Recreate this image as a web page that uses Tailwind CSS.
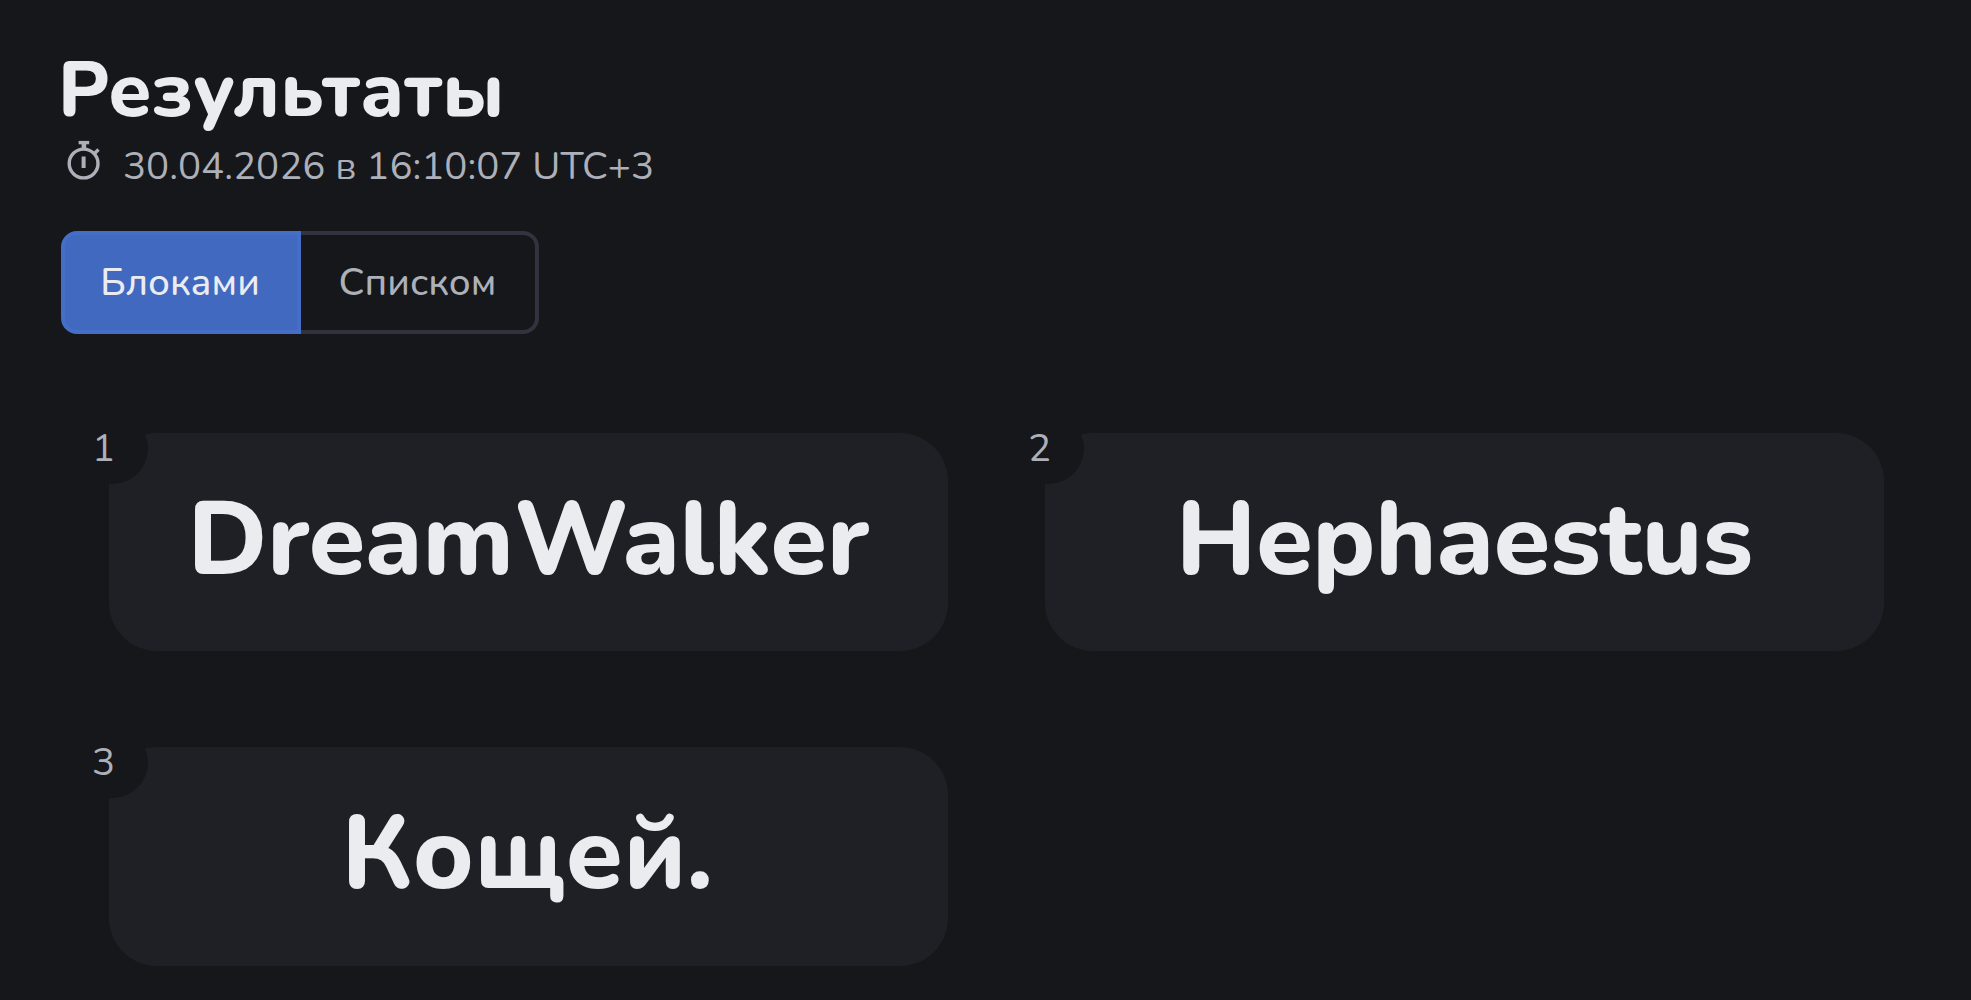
<!DOCTYPE html>
<html lang="ru">
<head>
    <meta charset="UTF-8">
    <meta name="viewport" content="width=device-width, initial-scale=1.0">
    <title>Результаты</title>
    <script src="https://cdn.jsdelivr.net/npm/@tailwindcss/browser@4"></script>
</head>
<body class="h-screen overflow-hidden bg-[#15171a] font-['Nunito','Noto_Sans',sans-serif] text-[38.5px] text-[#adb0b9]">
    <main class="pt-[44px] pl-[61px] pr-[51px]">
        <!-- Header -->
        <h1 class="-ml-[3px] text-[77.4px] leading-[93px] font-extrabold text-[#ebecf0]">Результаты</h1>
        <div class="flex items-start h-[58px] mt-px">
            <svg class="w-[46px] h-[46px]" viewBox="0 0 46 46" fill="none" stroke="currentColor" stroke-width="3.4">
                <circle cx="22.6" cy="25.5" r="14.4"/>
                <path d="M17.6 4.6h10.6"/>
                <path d="M22.9 5v7" stroke-width="4.6"/>
                <path d="M32.5 16.5l5-5"/>
                <path d="M22.6 18.5v11.5" stroke-width="4"/>
            </svg>
            <span class="ml-[16px] leading-[58px]">30.04.2026 в 16:10:07 UTC+3</span>
        </div>

        <!-- View switch -->
        <div class="flex mt-[35px] w-[478px] h-[103px]">
            <button class="w-[240px] pr-[2px] rounded-l-2xl border-4 border-[#446ec8] bg-[#4169c0] font-medium text-[#ebecf0]">Блоками</button>
            <button class="flex-1 pr-px rounded-r-2xl border-4 border-l-0 border-[#31343e] font-medium">Списком</button>
        </div>

        <!-- Results -->
        <div class="grid grid-cols-2 gap-x-[97px] gap-y-[96px] mt-[99px] pl-[48px] pr-[36px]">
            <div class="relative flex items-center justify-center h-[218px] rounded-[48px] bg-[#1e2025]">
                <span class="absolute -left-[50px] -top-[20px] flex items-center justify-center w-[89px] h-[71px] rounded-full bg-[#15171a]">1</span>
                <span class="pb-[3px] text-[102.8px] font-extrabold text-[#ebecf0]">DreamWalker</span>
            </div>
            <div class="relative flex items-center justify-center h-[218px] rounded-[48px] bg-[#1e2025]">
                <span class="absolute -left-[50px] -top-[20px] flex items-center justify-center w-[89px] h-[71px] rounded-full bg-[#15171a]">2</span>
                <span class="pb-[3px] text-[102.8px] font-extrabold text-[#ebecf0]">Hephaestus</span>
            </div>
            <div class="relative flex items-center justify-center h-[219px] rounded-[48px] bg-[#1e2025]">
                <span class="absolute -left-[50px] -top-[20px] flex items-center justify-center w-[89px] h-[71px] rounded-full bg-[#15171a]">3</span>
                <span class="pr-[2px] pb-[5px] text-[102.8px] font-extrabold text-[#ebecf0]">Кощей.</span>
            </div>
        </div>
    </main>
</body>
</html>
